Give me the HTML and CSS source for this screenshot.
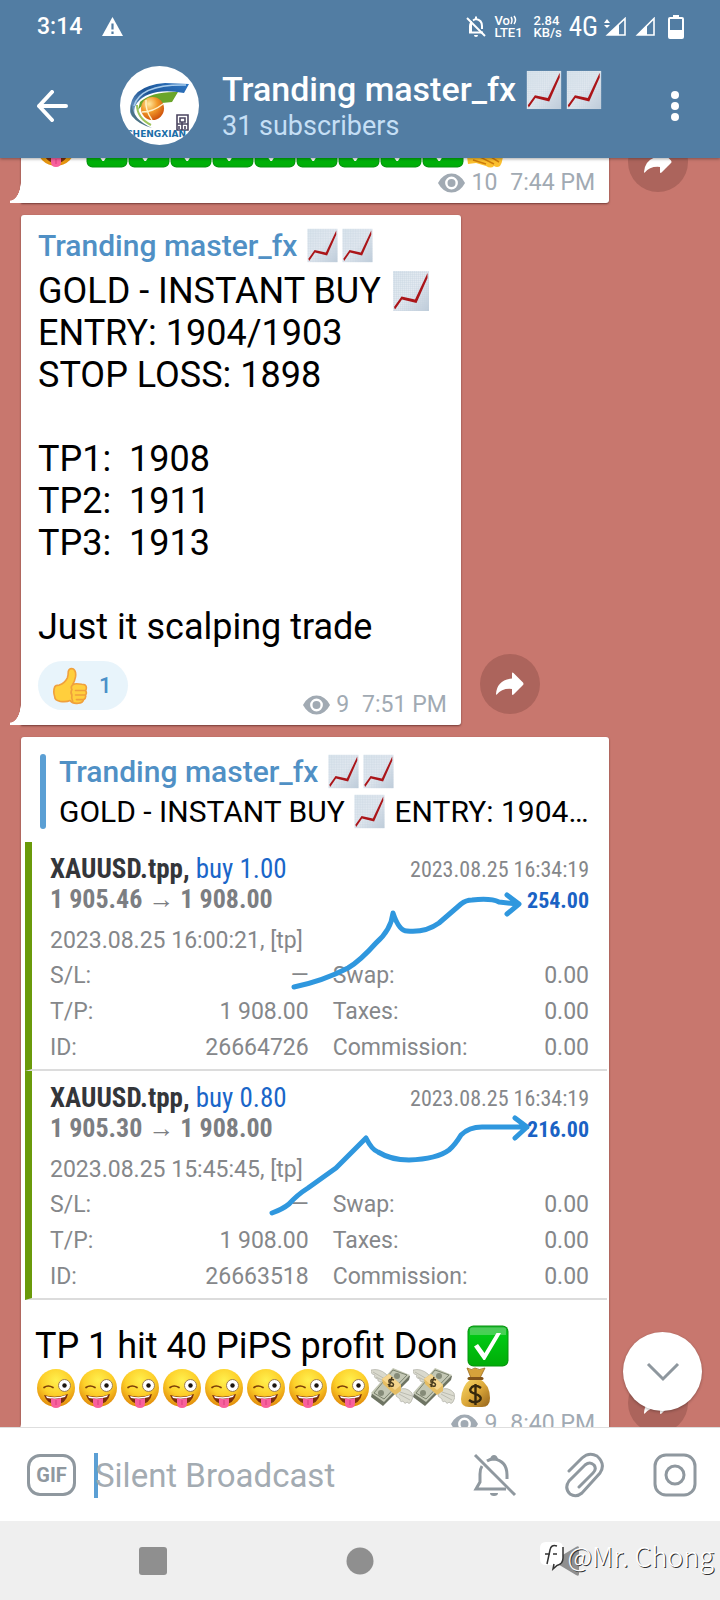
FILE: index.html
```html
<!DOCTYPE html>
<html lang="en">
<head>
    <meta charset="UTF-8">
    <meta name="viewport" content="width=device-width, initial-scale=1">
    <title>Tranding master_fx</title>
    <link rel="stylesheet" href="styles.css">
</head>
<body>
<!-- shared emoji and icons -->
<svg class="defs" width="0" height="0" aria-hidden="true">
    <defs>
        <linearGradient id="paper" x1="0" y1="0" x2="1" y2="1">
            <stop offset="0" stop-color="#dbe6ee"/>
            <stop offset="0.5" stop-color="#e4eaf1"/>
            <stop offset="1" stop-color="#bccad8"/>
        </linearGradient>
        <pattern id="grid" width="2" height="2" patternUnits="userSpaceOnUse">
            <path d="M0 0H2M0 0V2" stroke="#c2d0de" stroke-width="0.6"/>
        </pattern>
        <radialGradient id="face" cx="0.5" cy="0.3" r="0.75">
            <stop offset="0" stop-color="#fff04e"/>
            <stop offset="0.5" stop-color="#fdd02a"/>
            <stop offset="1" stop-color="#dd7f05"/>
        </radialGradient>
        <linearGradient id="green" x1="0" y1="0" x2="0" y2="1">
            <stop offset="0" stop-color="#19b52a"/>
            <stop offset="0.25" stop-color="#00c814"/>
            <stop offset="1" stop-color="#00ad08"/>
        </linearGradient>
        <linearGradient id="sack" x1="0" y1="0" x2="1" y2="1">
            <stop offset="0" stop-color="#f7d96a"/>
            <stop offset="0.5" stop-color="#dda93a"/>
            <stop offset="1" stop-color="#94621a"/>
        </linearGradient>
        <radialGradient id="ball" cx="0.35" cy="0.3" r="0.8">
            <stop offset="0" stop-color="#ffe9a0"/>
            <stop offset="0.45" stop-color="#f29a2a"/>
            <stop offset="1" stop-color="#c94606"/>
        </radialGradient>
        <linearGradient id="swoosh" x1="0" y1="1" x2="1" y2="0">
            <stop offset="0" stop-color="#8db4d6"/>
            <stop offset="0.5" stop-color="#1e5596"/>
            <stop offset="1" stop-color="#2f78c6"/>
        </linearGradient>
    </defs>
    <symbol id="e-chart" viewBox="0 0 42 42">
        <rect x="3" y="1" width="36" height="40" fill="url(#paper)"/>
        <rect x="3" y="1" width="36" height="40" fill="url(#grid)"/>
        <path d="M4 37L11.500 26.500L25 29.500L37.500 3V8L26.500 33L12 29.500L5 39.500Z" fill="#ab1519"/>
    </symbol>
    <symbol id="e-tongue" viewBox="0 0 42 42">
        <circle cx="21" cy="21" r="19" fill="url(#face)"/>
        <path d="M9 28Q21 32 33 27Q31 37 21 37Q12 37 9 28Z" fill="#7c2f0c"/>
        <path d="M11 29Q21 32 31 28L30 30Q21 33 12 31Z" fill="#fff"/>
        <path d="M16 31Q21 33 26 31V36Q26 41 21 41Q16 41 16 36Z" fill="#f8609d"/>
        <path d="M21 33V38" stroke="#d93c7c" stroke-width="1"/>
        <path d="M9 20.500Q13 17.500 18 20.500" fill="none" stroke="#7c3f08" stroke-width="1.700" stroke-linecap="round"/>
        <circle cx="29.500" cy="18.500" r="6" fill="#fff" stroke="#9c7d50" stroke-width="1"/>
        <circle cx="29.500" cy="18.500" r="2.200" fill="#1b1510"/>
    </symbol>
    <symbol id="e-check" viewBox="0 0 42 42">
        <rect x="0.500" y="0.500" width="41" height="41" rx="6" fill="#07930f"/>
        <rect x="1.500" y="1.500" width="39" height="39" rx="5" fill="url(#green)"/>
        <path d="M3 4Q3 2.500 5 2.500H37Q39 2.500 39 4V10H3Z" fill="#fff" opacity="0.250"/>
        <path d="M7 21.500L11 19L17.500 28L29.500 8H34L18 35H16.500Z" fill="#fff"/>
    </symbol>
    <symbol id="e-thumb" viewBox="0 0 42 42">
        <path d="M3 22Q4 20 8 20Q14 18 17 12Q18 9 18 5Q19 1 23 2Q27 4 26 11Q25 16 23 19Q26 18 33 19Q38 19 38 23Q38 25 37 26Q39 29 37 31Q38 34 35 36Q34 40 29 40Q23 41 20 37Q16 39 9 38Q3 37 3 33Q1 27 3 22Z" fill="#ffcf3d" stroke="#f0a03c" stroke-width="1.800" stroke-linejoin="round"/>
        <path d="M37 26H26M36.500 31H26M35 36H27M24 19Q20 21 22 25Q20 28 22 31Q21 35 23 38" fill="none" stroke="#efa03c" stroke-width="1.800" stroke-linecap="round"/>
    </symbol>
    <symbol id="e-hand" viewBox="0 0 42 42">
        <path d="M3 30L12 14L28 8L39 20Q40 34 36 40Q33 42 30 40Q27 43 22 40L12 37L4 38Z" fill="#fcc02f"/>
        <path d="M9 34L22 38M14 30L30 38M22 28L35 36" stroke="#cf7d0c" stroke-width="1.500"/>
    </symbol>
    <symbol id="e-wings" viewBox="0 0 42 42">
        <path d="M0 3Q8 1 15 7L19 12L13 18Q10 17 11 15Q6 15 7 12Q2 11 4 8Q-1 7 0 3Z" fill="#d9d9cd" stroke="#a5a59b" stroke-width="0.600"/>
        <path d="M27 23Q35 19 41 26Q43 31 40 35Q38 38 36 35Q34 38 32 34Q29 36 29 32L25 29Z" fill="#dcdcd1" stroke="#a5a59b" stroke-width="0.600"/>
        <path d="M2 5L14 12M5 10L13 14M28 27L39 33M29 25L41 29" stroke="#aeaea4" stroke-width="0.700"/>
        <path d="M22 2L39 9L38 13L12 39L0 30L1 26Z" fill="#6e7463"/>
        <path d="M22 1L39 8L13 35L0 26Z" fill="#c3c7b4"/>
        <path d="M22 3L36 8L13 32L3 26Z" fill="none" stroke="#7b826e" stroke-width="1"/>
        <circle cx="26" cy="9" r="3" fill="#858b78"/>
        <circle cx="10" cy="26" r="3" fill="#858b78"/>
        <path d="M11 12L18 7L30 18V24L24 28L12 17Z" fill="#e5bd63"/>
        <path d="M11 12L18 7L30 18L24 23Z" fill="#f5d58d"/>
        <path d="M23 13Q17 11 18 15Q24 16 22 19Q19 20 17 17M21 10L18 20" fill="none" stroke="#46391d" stroke-width="1.500"/>
    </symbol>
    <symbol id="e-sack" viewBox="0 0 42 42">
        <path d="M12 1Q17 4 20 1Q24 4 30 1L25 11H16Z" fill="#d5a13b" stroke="#9b6b1c" stroke-width="0.800"/>
        <path d="M16 12H25Q35 18 35 31Q35 40 27 40H14Q6 40 6 32Q7 18 16 12Z" fill="url(#sack)"/>
        <path d="M14 11.500H27" stroke="#81521a" stroke-width="3" stroke-linecap="round"/>
        <path d="M26 21Q21 17 17 20Q13 24 18 26L23 28Q28 31 24 34Q19 37 14 33M20.500 17V38" fill="none" stroke="#35270c" stroke-width="2.400"/>
    </symbol>
    <symbol id="i-eye" viewBox="0 0 27 20">
        <path d="M0 10Q5 0.500 13.500 0.500T27 10Q22 19.500 13.500 19.500T0 10Z" fill="currentColor"/>
        <circle cx="13.500" cy="10" r="5.200" fill="none" stroke="#fff" stroke-width="2.400"/>
    </symbol>
    <symbol id="i-share" viewBox="0 0 28 24">
        <path d="M16 1.500Q16 0 17.500 1L27 10.500Q28 12 27 13L17.500 22.500Q16 23.500 16 22V17Q6 16 0.800 22.500Q0 23 0 22Q1 8 16 6.500Z" fill="#fff"/>
    </symbol>
</svg>

<div class="app">
    <header class="header">
        <div class="status">
            <span class="clock">3:14</span>
            <svg class="warn" viewBox="0 0 21 19" aria-hidden="true">
                <path d="M10.500 0L21 19H0Z" fill="#fff"/>
                <path d="M10.500 6.500V12.500M10.500 14.500V17" stroke="#527da3" stroke-width="2.200"/>
            </svg>
            <svg class="mute" viewBox="0 0 20 22" aria-hidden="true">
                <path d="M5 5V16M3 16.500H17M4 17V10Q4 8 5 6.500M7 4.500Q9 3 10 3Q16 4 16 10V13M10 0.500V3" fill="none" stroke="#fff" stroke-width="2"/>
                <path d="M1 2L19 20" stroke="#fff" stroke-width="2"/>
                <path d="M8 19H12Q12 21 10 21T8 19Z" fill="#fff"/>
            </svg>
            <span class="volte">
                <span>Vo<svg width="9" height="10" viewBox="0 0 9 10" aria-hidden="true"><path d="M1 2Q3 5 1 9M4 1Q7 5 4 9" fill="none" stroke="#fff" stroke-width="1.500"/></svg></span>
                <span>LTE1</span>
            </span>
            <span class="speed"><span>2.84</span><span>KB/s</span></span>
            <span class="net">4G</span>
            <svg class="signal" viewBox="0 0 22 19" aria-hidden="true">
                <path d="M3 2L6 6H0ZM3 11L0 8H6Z" fill="#fff"/>
                <path d="M21 1.500V18H3.500Z" fill="none" stroke="#fff" stroke-width="1.600"/>
                <path d="M15 7V18H3.500Z" fill="#fff"/>
            </svg>
            <svg class="signal second" viewBox="0 0 22 19" aria-hidden="true">
                <path d="M20 1.500V18H3.500Z" fill="none" stroke="#fff" stroke-width="1.600"/>
                <path d="M13 8V18H3.500Z" fill="#fff"/>
            </svg>
            <svg class="battery" viewBox="0 0 16 24" aria-hidden="true">
                <path d="M5 0H11V3H5Z" fill="#fff"/>
                <rect x="1" y="3" width="14" height="20" rx="1" fill="none" stroke="#fff" stroke-width="2"/>
                <rect x="1" y="15" width="14" height="8" fill="#fff"/>
            </svg>
        </div>
        <div class="titlebar">
            <button class="icon-btn back" aria-label="Back">
                <svg width="32" height="32" viewBox="0 0 32 32"><path d="M16 2L3 16L16 30M3 16H30" fill="none" stroke="#fff" stroke-width="4" stroke-linecap="round" stroke-linejoin="round"/></svg>
            </button>
            <svg class="avatar" viewBox="0 0 79 79" role="img" aria-label="Chengxian">
                <clipPath id="round"><circle cx="39.500" cy="39.500" r="39.500"/></clipPath>
                <g clip-path="url(#round)">
                    <rect width="79" height="79" fill="#fff"/>
                    <path d="M10 46Q9 20 45 17L69 18L64 27Q30 21 17 37Q12 44 16 52Q11 51 10 46Z" fill="url(#swoosh)"/>
                    <path d="M14 40Q20 18 66 19" fill="none" stroke="#a9cdec" stroke-width="1.500"/>
                    <path d="M20 36Q32 25 58 26L52 36L42 37Q30 29 18 44Z" fill="#6aa52a"/>
                    <path d="M12 38Q12 53 32 62Q18 58 12 50Q9 44 12 38Z" fill="#4b7387"/>
                    <path d="M17 39Q17 52 31 59" fill="none" stroke="#9ec45c" stroke-width="2"/>
                    <circle cx="32.500" cy="42.500" r="11.500" fill="url(#ball)"/>
                    <path d="M26 34Q25 44 32 54M22 46Q33 46 43 38" fill="none" stroke="#fff2c8" stroke-width="1.400"/>
                    <path d="M57 49H68V64H57ZM60 52H65V56H60ZM57 58H68M62 56V64M65 60V63M59 60V63" fill="none" stroke="#4b4560" stroke-width="1.600"/>
                    <text class="logo-text" x="6" y="71">CHENGXIAN</text>
                </g>
            </svg>
            <div class="title">
                <h1>Tranding master_fx <svg class="emoji"><use href="#e-chart"/></svg><svg class="emoji"><use href="#e-chart"/></svg></h1>
                <p>31 subscribers</p>
            </div>
            <button class="icon-btn" aria-label="More options">
                <svg width="10" height="32" viewBox="0 0 10 32"><circle cx="5" cy="5" r="4" fill="#fff"/><circle cx="5" cy="16" r="4" fill="#fff"/><circle cx="5" cy="27" r="4" fill="#fff"/></svg>
            </button>
        </div>
    </header>

    <main class="chat">
        <div class="messages">
            <div class="row">
                <article class="bubble wide tail">
                    <div class="text caption"><svg class="emoji"><use href="#e-tongue"/></svg> <svg class="emoji"><use href="#e-check"/></svg><svg class="emoji"><use href="#e-check"/></svg><svg class="emoji"><use href="#e-check"/></svg><svg class="emoji"><use href="#e-check"/></svg><svg class="emoji"><use href="#e-check"/></svg><svg class="emoji"><use href="#e-check"/></svg><svg class="emoji"><use href="#e-check"/></svg><svg class="emoji"><use href="#e-check"/></svg><svg class="emoji"><use href="#e-check"/></svg><svg class="emoji"><use href="#e-hand"/></svg></div>
                    <footer class="foot">
                        <span class="meta"><svg class="eye"><use href="#i-eye"/></svg><span>10</span><time>7:44 PM</time></span>
                    </footer>
                </article>
                <button class="share" aria-label="Share"><svg><use href="#i-share"/></svg></button>
            </div>

            <div class="row">
                <article class="bubble tail named">
                    <h2 class="name">Tranding master_fx <svg class="emoji"><use href="#e-chart"/></svg><svg class="emoji"><use href="#e-chart"/></svg></h2>
                    <div class="text">GOLD - INSTANT BUY <svg class="emoji"><use href="#e-chart"/></svg>
ENTRY: 1904/1903
STOP LOSS: 1898

TP1:  1908
TP2:  1911
TP3:  1913

Just it scalping trade</div>
                    <footer class="foot">
                        <button class="reaction"><svg class="emoji"><use href="#e-thumb"/></svg>1</button>
                        <span class="meta"><svg class="eye"><use href="#i-eye"/></svg><span>9</span><time>7:51 PM</time></span>
                    </footer>
                </article>
                <button class="share" aria-label="Share"><svg><use href="#i-share"/></svg></button>
            </div>

            <div class="row">
                <article class="bubble wide tail">
                    <blockquote class="reply">
                        <h2 class="name">Tranding master_fx <svg class="emoji"><use href="#e-chart"/></svg><svg class="emoji"><use href="#e-chart"/></svg></h2>
                        <p>GOLD - INSTANT BUY <svg class="emoji"><use href="#e-chart"/></svg> ENTRY: 1904…</p>
                    </blockquote>
                    <div class="trades">
                        <section class="trade">
                            <div class="trade-head">
                                <div>
                                    <p class="symbol"><b>XAUUSD.tpp,</b> buy 1.00</p>
                                    <p class="prices">1 905.46 → 1 908.00</p>
                                </div>
                                <div class="closed">
                                    <time>2023.08.25 16:34:19</time>
                                    <p class="profit">254.00</p>
                                </div>
                            </div>
                            <p class="opened">2023.08.25 16:00:21, [tp]</p>
                            <table class="details">
                                <tr><th>S/L:</th><td>—</td><th>Swap:</th><td>0.00</td></tr>
                                <tr><th>T/P:</th><td>1 908.00</td><th>Taxes:</th><td>0.00</td></tr>
                                <tr><th>ID:</th><td>26664726</td><th>Commission:</th><td>0.00</td></tr>
                            </table>
                            <svg class="scribble" viewBox="0 0 582 229" aria-hidden="true">
                                <path d="M269 145Q298 139 323 126Q335 119 351 101Q366 88 368 71Q374 89 382 89Q400 91 414 81L436 62Q441 58 447 58Q466 56 474 60L493 62M482 53L494 62L482 72"/>
                            </svg>
                        </section>
                        <section class="trade">
                            <div class="trade-head">
                                <div>
                                    <p class="symbol"><b>XAUUSD.tpp,</b> buy 0.80</p>
                                    <p class="prices">1 905.30 → 1 908.00</p>
                                </div>
                                <div class="closed">
                                    <time>2023.08.25 16:34:19</time>
                                    <p class="profit">216.00</p>
                                </div>
                            </div>
                            <p class="opened">2023.08.25 15:45:45, [tp]</p>
                            <table class="details">
                                <tr><th>S/L:</th><td>—</td><th>Swap:</th><td>0.00</td></tr>
                                <tr><th>T/P:</th><td>1 908.00</td><th>Taxes:</th><td>0.00</td></tr>
                                <tr><th>ID:</th><td>26663518</td><th>Commission:</th><td>0.00</td></tr>
                            </table>
                            <svg class="scribble" viewBox="0 0 582 229" aria-hidden="true">
                                <path d="M247 142Q258 138 264 133Q272 124 283 117L311 97L341 67Q347 79 353 81Q366 89 384 89Q412 88 424 79Q430 74 436 64Q444 56 457 56H502M490 47L502 56L490 67"/>
                            </svg>
                        </section>
                    </div>
                    <div class="text caption">TP 1 hit 40 PiPS profit Don <svg class="emoji"><use href="#e-check"/></svg>
<svg class="emoji"><use href="#e-tongue"/></svg><svg class="emoji"><use href="#e-tongue"/></svg><svg class="emoji"><use href="#e-tongue"/></svg><svg class="emoji"><use href="#e-tongue"/></svg><svg class="emoji"><use href="#e-tongue"/></svg><svg class="emoji"><use href="#e-tongue"/></svg><svg class="emoji"><use href="#e-tongue"/></svg><svg class="emoji"><use href="#e-tongue"/></svg><svg class="emoji"><use href="#e-wings"/></svg><svg class="emoji"><use href="#e-wings"/></svg><svg class="emoji"><use href="#e-sack"/></svg></div>
                    <footer class="foot">
                        <span class="meta"><svg class="eye"><use href="#i-eye"/></svg><span>9</span><time>8:40 PM</time></span>
                    </footer>
                </article>
                <button class="share" aria-label="Share"><svg><use href="#i-share"/></svg></button>
            </div>
        </div>
        <button class="to-bottom" aria-label="Scroll to bottom">
            <svg width="34" height="20" viewBox="0 0 34 20"><path d="M2 2L17 17L32 2" fill="none" stroke="#8e979e" stroke-width="3"/></svg>
        </button>
    </main>

    <form class="composer">
        <button type="button" class="gif">GIF</button>
        <label class="field">
            <span class="caret"></span>
            <input type="text" placeholder="Silent Broadcast" aria-label="Silent Broadcast">
        </label>
        <button type="button" class="icon-btn" aria-label="Notifications off">
            <svg width="44" height="44" viewBox="0 0 44 44" fill="none" stroke="#8f989f" stroke-width="3">
                <path d="M2 2L42 42"/>
                <path d="M9 13Q7 16 7 21V29L3 36H33M14 8Q17 6 21 6Q34 8 34 22V26"/>
                <path d="M17 6Q18 2 21 2T25 6Z" fill="#8f989f" stroke="none"/>
                <path d="M17 40H25Q25 43 21 43T17 40Z" fill="#8f989f" stroke="none"/>
            </svg>
        </button>
        <button type="button" class="icon-btn" aria-label="Attach">
            <svg width="40" height="46" viewBox="0 0 40 46" fill="none" stroke="#8f989f" stroke-width="3" stroke-linecap="round">
                <path d="M4 19L17 6Q24 -0.500 32 4Q41 12 35 21L17 41Q11 46 5 42Q-1 36 4 29L20 13Q25 9 29 13Q32 17 28 21L14 35"/>
            </svg>
        </button>
        <button type="button" class="icon-btn" aria-label="Record video">
            <svg width="44" height="44" viewBox="0 0 44 44" fill="none" stroke="#8f989f" stroke-width="3">
                <rect x="2" y="2" width="40" height="40" rx="11"/>
                <circle cx="22" cy="22" r="9"/>
            </svg>
        </button>
    </form>

    <nav class="navbar">
        <button aria-label="Recent apps"><svg width="30" height="30" viewBox="0 0 30 30"><rect x="1" y="1" width="28" height="28" rx="3" fill="#8f8f8f"/></svg></button>
        <button aria-label="Home"><svg width="28" height="28" viewBox="0 0 28 28"><circle cx="14" cy="14" r="13.500" fill="#8f8f8f"/></svg></button>
        <button aria-label="Back"><svg width="26" height="32" viewBox="0 0 26 32"><path d="M25 3V29Q25 32 22 30L2 18Q0 16 2 14L22 2Q25 0 25 3Z" fill="#8f8f8f"/></svg></button>
        <div class="watermark">
            <svg width="26" height="30" viewBox="0 0 26 30" aria-hidden="true">
                <path d="M7 1H18Q24 1 24 7V17Q24 23 18 24L13 29L14 24H7Q1 24 1 18V7Q1 1 7 1Z" fill="#fff"/>
                <path d="M18 5Q12 3 11 9L8 23M6 13H11M14 13H18M24 6V17Q24 23 18 24.500L14 28L15 23" fill="none" stroke="#333" stroke-width="1.500"/>
            </svg>
            <span>@Mr. Chong</span>
        </div>
    </nav>
</div>
</body>
</html>
```

FILE: styles.css
```css
*{
    box-sizing:border-box;
}
body,h1,h2,p,blockquote{
    margin:0;
    padding:0;
}
body{
    background:#c8776e;
    font-family:Roboto,"Liberation Sans",sans-serif;
    color:#000;
}
button,input{
    font-family:inherit;
    border:0;
    padding:0;
    background:none;
    color:inherit;
}
button{
    cursor:pointer;
}
svg{
    display:block;
    flex:none;
}
.defs{
    position:absolute;
}
.app{
    display:flex;
    flex-direction:column;
    height:100vh;
}
.emoji{
    display:inline-block;
    width:42px;
    height:42px;
    vertical-align:-9px;
}
.icon-btn{
    display:flex;
    align-items:center;
    justify-content:center;
}

/* header */
.header{
    position:relative;
    z-index:2;
    background:#527da3;
    color:#fff;
    box-shadow:0 1px 3px rgba(0,0,0,.35);
}
.status{
    display:flex;
    align-items:center;
    height:53px;
    padding:0 36px 0 37px;
    font-weight:500;
}
.clock{
    font-size:23px;
}
.warn{
    width:21px;
    height:19px;
    margin:0 auto 0 20px;
}
.mute{
    width:20px;
    height:22px;
}
.volte,.speed{
    display:flex;
    flex-direction:column;
    font-size:13px;
    line-height:12px;
}
.volte{
    margin-left:8px;
}
.volte svg{
    display:inline-block;
}
.speed{
    margin-left:11px;
}
.net{
    margin-left:7px;
    font:27px "Roboto Condensed",Roboto,sans-serif;
}
.signal{
    width:22px;
    height:19px;
    margin-left:6px;
}
.signal.second{
    margin-left:8px;
}
.battery{
    width:16px;
    height:24px;
    margin-left:12px;
}
.titlebar{
    display:flex;
    align-items:center;
    height:105px;
    padding:0 40px 0 36px;
}
.avatar{
    width:79px;
    height:79px;
    margin:0 23px 0 52px;
}
.logo-text{
    font:bold 9px "DejaVu Sans",sans-serif;
    fill:#1c6ea8;
}
.title{
    flex:1;
    min-width:0;
}
.title h1{
    font-size:34px;
    line-height:40px;
    font-weight:500;
    white-space:nowrap;
}
.title .emoji{
    width:40px;
    height:40px;
}
.title p{
    font-size:27px;
    line-height:32px;
    color:#c5dff5;
}

/* chat */
.chat{
    position:relative;
    flex:1;
    min-height:0;
    overflow:hidden;
}
.messages{
    display:flex;
    flex-direction:column;
    gap:12px;
    margin-top:-40px;
    padding-left:21px;
}
.row{
    display:flex;
    align-items:flex-end;
}
.bubble{
    position:relative;
    background:#fff;
    border-radius:3px;
    padding-bottom:7px;
    box-shadow:0 1px 2px rgba(60,20,20,.6);
}
.bubble.wide{
    width:calc(100% - 111px);
    padding-top:8px;
}
.bubble.tail{
    border-bottom-left-radius:0;
}
.tail:before{
    content:"";
    position:absolute;
    left:-11px;
    bottom:0;
    width:12px;
    height:22px;
    background:radial-gradient(ellipse 11px 20px at 0 0,transparent 96%,#fff 100%);
}
.named{
    padding-top:13px;
}
.name{
    font-size:30px;
    line-height:35px;
    font-weight:500;
    color:#5090c5;
    white-space:nowrap;
}
.name .emoji,.reply .emoji{
    width:35px;
    height:35px;
    vertical-align:-7px;
}
.named .name{
    padding:0 17px;
    margin-bottom:7px;
}
.text{
    padding:0 29px 0 17px;
    font-size:36px;
    line-height:42px;
    white-space:pre-wrap;
}
.text .emoji{
    vertical-align:top;
}
.text.caption{
    padding:0 14px;
}
.foot{
    display:flex;
    align-items:flex-end;
    padding:1px 14px 0 17px;
}
.named .foot{
    padding-top:13px;
}
.reaction{
    display:flex;
    align-items:center;
    height:49px;
    padding:0 16px 0 14px;
    gap:9px;
    margin-bottom:8px;
    border-radius:25px;
    background:#e8f4fb;
    color:#4a90c9;
    font-size:22px;
    font-weight:500;
}
.reaction .emoji{
    width:38px;
    height:38px;
}
.meta{
    display:flex;
    align-items:center;
    margin-left:auto;
    font-size:23px;
    line-height:27px;
    color:#a1aab3;
}
.meta time{
    margin-left:13px;
}
.eye{
    width:27px;
    height:20px;
    margin-right:6px;
}
.share{
    flex:none;
    display:flex;
    align-items:center;
    justify-content:center;
    width:60px;
    height:60px;
    margin:0 0 11px 19px;
    border-radius:50%;
    background:#ac645c;
}
.share svg{
    width:28px;
    height:24px;
}
.reply{
    position:relative;
    margin:9px 18px 13px 19px;
    padding-left:19px;
}
.reply:before{
    content:"";
    position:absolute;
    left:0;
    top:0;
    bottom:0;
    width:6px;
    border-radius:3px;
    background:#5b9fd4;
}
.reply p{
    margin-top:5px;
    font-size:30px;
    line-height:35px;
    white-space:nowrap;
}

/* trade history */
.trades{
    margin:0 2px 25px 4px;
}
.trade{
    position:relative;
    height:229px;
    padding:12px 18px 0 18px;
    border-left:7px solid #6a9a0a;
    border-bottom:2px solid #dcdcdc;
    font-size:23px;
    color:#85878a;
}
.trade-head{
    display:flex;
    justify-content:space-between;
    line-height:30px;
    font-family:"Roboto Condensed","Liberation Sans Narrow",Roboto,sans-serif;
}
.symbol{
    font-size:27px;
    color:#1a66c9;
}
.symbol b{
    color:#34363a;
}
.prices{
    font-size:26px;
    font-weight:bold;
    color:#7c7e82;
}
.closed{
    text-align:right;
    font-size:22px;
}
.closed time{
    display:block;
    line-height:32px;
}
.profit{
    font-weight:bold;
    color:#1a62c4;
}
.opened{
    margin-top:8px;
    line-height:33px;
}
.details{
    width:100%;
    table-layout:fixed;
    border-collapse:collapse;
}
.details th,.details td{
    height:36px;
    padding:0;
    font-weight:400;
    text-align:left;
}
.details td{
    text-align:right;
}
.details th:nth-child(1){
    width:20%;
}
.details td:nth-child(2){
    width:28%;
}
.details th:nth-child(3){
    width:32%;
    padding-left:24px;
}
.scribble{
    position:absolute;
    left:-7px;
    top:0;
    width:calc(100% + 7px);
    height:229px;
    fill:none;
    stroke:#2f97de;
    stroke-width:5;
    stroke-linecap:round;
    stroke-linejoin:round;
}
.to-bottom{
    position:absolute;
    right:18px;
    bottom:16px;
    display:flex;
    align-items:center;
    justify-content:center;
    width:79px;
    height:79px;
    border-radius:50%;
    background:#fff;
    box-shadow:0 1px 3px rgba(0,0,0,.3);
}

/* composer */
.composer{
    position:relative;
    display:flex;
    align-items:center;
    height:94px;
    padding:1px 23px 0 27px;
    gap:48px;
    background:#fff;
    border-top:1px solid #dedede;
}
.gif{
    width:49px;
    height:42px;
    border:3px solid #8f989f;
    border-radius:13px;
    color:#8f989f;
    font-size:20px;
    font-weight:bold;
}
.field{
    flex:1;
    display:flex;
    align-items:center;
    min-width:0;
    margin-left:-30px;
}
.caret{
    width:4px;
    height:45px;
    margin-right:-3px;
    background:#5b9fd4;
}
.field input{
    flex:1;
    min-width:0;
    height:45px;
    font-size:33px;
    outline:none;
}
.field input::placeholder{
    color:#a3abb2;
}

/* system navigation */
.navbar{
    position:relative;
    display:grid;
    grid-template-columns:repeat(3,1fr);
    height:79px;
    padding:0 50px;
    background:#efefef;
}
.navbar button{
    display:flex;
    align-items:center;
    justify-content:center;
}
.watermark{
    position:absolute;
    right:6px;
    bottom:26px;
    display:flex;
    align-items:center;
    gap:3px;
    font-family:"Noto Sans CJK SC",sans-serif;
    font-size:27px;
    font-weight:300;
    line-height:36px;
    color:#fff;
    text-shadow:1px 1px 0 #333;
}
```
